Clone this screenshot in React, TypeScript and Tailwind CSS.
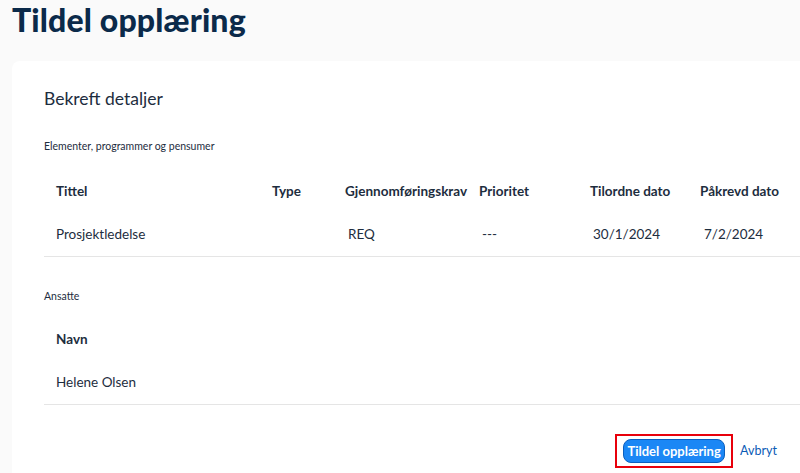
import React from 'react';

const cols = 'grid grid-cols-[216px_73px_134px_111px_110px_1fr]';

export default function App() {
  return (
    <div className="w-[800px] h-[473px] overflow-hidden bg-[#fafafa] font-['Lato',sans-serif] text-[#1d2d3e]">
      <h1 className="pl-[12px] h-[61px] text-[32px] leading-[39px] font-black tracking-[0.15px] text-[#0b2a4a]">
        Tildel opplæring
      </h1>

      <div className="ml-[12px] w-[830px] h-[430px] rounded-lg bg-white pl-[32px] pt-[26px]">
        <h2 className="text-[17.5px] leading-[24px]">Bekreft detaljer</h2>

        <div className="mt-[28px] text-[10.5px] leading-[14px]">Elementer, programmer og pensumer</div>

        <div className="mt-[16px] text-[13.5px]">
          <div className={`${cols} h-[44px] items-center pl-[12px] font-bold`}>
            <span>Tittel</span>
            <span>Type</span>
            <span>Gjennomføringskrav</span>
            <span>Prioritet</span>
            <span>Tilordne dato</span>
            <span>Påkrevd dato</span>
          </div>
          <div className={`${cols} h-[44px] items-center pl-[12px] border-b border-[#e5e5e5]`}>
            <span>Prosjektledelse</span>
            <span></span>
            <span className="pl-[3px]">REQ</span>
            <span className="pl-[3px]">---</span>
            <span className="pl-[3px]">30/1/2024</span>
            <span className="pl-[4px]">7/2/2024</span>
          </div>
        </div>

        <div className="mt-[32px] text-[10.5px] leading-[14px]">Ansatte</div>

        <div className="mt-[14px] text-[13.5px]">
          <div className="h-[44px] flex items-center pl-[12px] font-bold">Navn</div>
          <div className="h-[44px] flex items-center pl-[12px] border-b border-[#e5e5e5]">Helene Olsen</div>
        </div>

        <div className="mt-[29px] flex items-center w-[733px] justify-end gap-[7px]">
          <div className="border-2 border-[#e8000b] px-[6px] py-[3px] flex">
            <button className="h-[24px] w-[102px] rounded-[8px] bg-[#1b87f5] border border-[#0b5fbf] text-white text-[13px] font-bold leading-none">
              Tildel opplæring
            </button>
          </div>
          <button className="text-[12.5px] text-[#0a5bb5]">Avbryt</button>
        </div>
      </div>
    </div>
  );
}
